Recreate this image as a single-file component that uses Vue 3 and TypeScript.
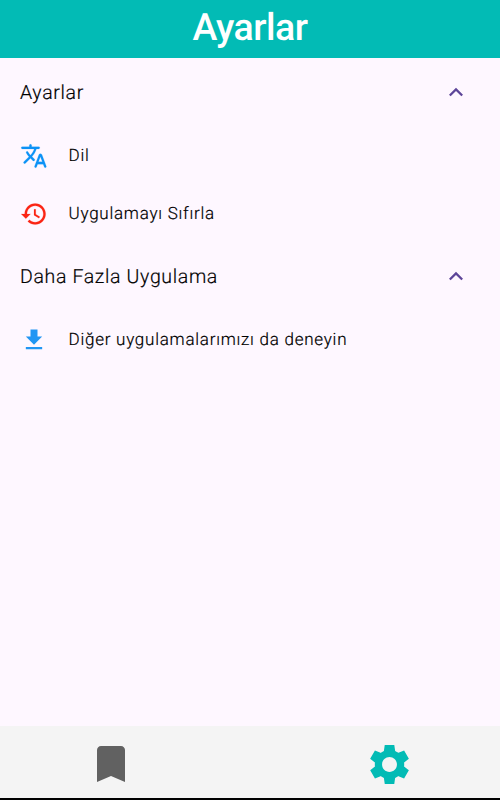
<script setup lang="ts">
interface Item { label: string; kind: string; path: string }
interface Section { title: string; items: Item[] }
const sections: Section[] = [
  {
    title: 'Ayarlar',
    items: [
      { label: 'Dil', kind: 'translate', path: 'M12.65 15.67c.14-.36.05-.77-.23-1.05l-2.09-2.06.03-.03c1.74-1.94 2.98-4.17 3.71-6.53h1.94c.54 0 .99-.45.99-.99v-.02c0-.54-.45-.99-.99-.99H10V3c0-.55-.45-1-1-1s-1 .45-1 1v1H1.99c-.54 0-.99.45-.99.99 0 .55.45.99.99.99h10.18C11.5 7.92 10.44 9.75 9 11.35c-.81-.89-1.49-1.86-2.06-2.88-.16-.29-.45-.47-.78-.47-.69 0-1.13.75-.79 1.35.63 1.13 1.4 2.21 2.3 3.21L3.3 16.87c-.4.39-.4 1.03 0 1.42.39.39 1.02.39 1.42 0L9 14l2.02 2.02c.51.51 1.38.32 1.63-.35zM17.5 10c-.6 0-1.14.37-1.35.94l-3.67 9.8c-.24.61.22 1.26.87 1.26.39 0 .74-.24.88-.61l.89-2.39h4.75l.9 2.39c.14.36.49.61.88.61.65 0 1.11-.65.88-1.26l-3.67-9.8c-.22-.57-.76-.94-1.36-.94zm-1.62 7l1.62-4.33L19.12 17h-3.24z' },
      { label: 'Uygulamayı Sıfırla', kind: 'history', path: 'M13 3c-4.97 0-9 4.03-9 9H1l3.89 3.89.07.14L9 12H6c0-3.87 3.13-7 7-7s7 3.13 7 7-3.13 7-7 7c-1.93 0-3.68-.79-4.94-2.06l-1.42 1.42C8.27 19.99 10.51 21 13 21c4.97 0 9-4.03 9-9s-4.03-9-9-9zm-1 5v5l4.28 2.54.72-1.21-3.5-2.08V8H12z' },
    ],
  },
  {
    title: 'Daha Fazla Uygulama',
    items: [
      { label: 'Diğer uygulamalarımızı da deneyin', kind: 'download', path: 'M19 9h-4V3H9v6H5l7 7 7-7zM5 18v2h14v-2H5z' },
    ],
  },
]
</script>

<template>
  <div class="screen">
    <header>Ayarlar</header>
    <main>
      <section v-for="s in sections" :key="s.title">
        <h2>{{ s.title }}
          <svg viewBox="0 0 24 24"><path d="M12 8.3l-6 6 1.41 1.41L12 11.13l4.59 4.58L18 14.3z" /></svg>
        </h2>
        <div v-for="i in s.items" :key="i.label" class="item">
          <svg viewBox="0 0 24 24" :class="i.kind"><path :d="i.path" /></svg>
          <span>{{ i.label }}</span>
        </div>
      </section>
    </main>
    <nav>
      <div class="tab"><svg class="bookmark" viewBox="0 0 24 24"><path d="M17 3H7c-1.1 0-1.99.9-1.99 2L5 21l7-3 7 3V5c0-1.1-.9-2-2-2z" /></svg></div>
      <div class="tab"><svg class="gear" viewBox="0 0 24 24"><path d="M19.44 12.99l-.01.02c.04-.33.08-.67.08-1.01 0-.34-.03-.66-.07-.99l.01.02 2.44-1.92-2.43-4.22-2.87 1.16.01.01c-.52-.4-1.09-.74-1.71-1h.01L14.44 2H9.57l-.44 3.07h.01c-.62.26-1.19.6-1.71 1l.01-.01-2.88-1.17-2.44 4.22 2.44 1.92.01-.02c-.04.33-.07.65-.07.99 0 .34.03.68.08 1.01l-.01-.02-2.1 1.65-.33.26 2.43 4.2 2.88-1.15-.02-.04c.53.41 1.1.75 1.73 1.01h-.03L9.58 22h4.85s.03-.18.06-.42l.38-2.65h-.01c.62-.26 1.2-.6 1.73-1.01l-.02.04 2.88 1.15 2.43-4.2s-.14-.12-.33-.26l-2.11-1.66zM12 15.8c-2.1 0-3.8-1.7-3.8-3.8s1.7-3.8 3.8-3.8 3.8 1.7 3.8 3.8-1.7 3.8-3.8 3.8z" /></svg></div>
    </nav>
  </div>
</template>

<style>
body { margin: 0; overflow: hidden; }
</style>
<style scoped>
.screen { width: 500px; height: 800px; display: flex; flex-direction: column; background: #fef7ff; font-family: Roboto, sans-serif; color: #000; text-rendering: geometricPrecision; }
header { height: 58px; box-sizing: border-box; padding-bottom: 2px; background: #02bbb5; color: #fff; display: flex; align-items: center; justify-content: center; font-size: 37.5px; font-weight: 500; letter-spacing: -0.5px; }
main { flex: 1; }
h2 { margin: 0; height: 68px; padding: 0 30px 0 20px; display: flex; align-items: center; justify-content: space-between; font-size: 19.5px; font-weight: 300; letter-spacing: 0.66px; -webkit-text-stroke: 0.2px #000; }
h2 svg { width: 28px; height: 28px; fill: #5d4599; }
.item { height: 58px; box-sizing: border-box; padding: 2px 20px 0; display: flex; align-items: center; gap: 20.5px; font-size: 17px; font-weight: 300; letter-spacing: 0.75px; -webkit-text-stroke: 0.2px #000; }
.item svg { width: 28px; height: 28px; }
.translate { fill: #0c92f6; stroke: #0c92f6; stroke-width: 0.15px; }
.download { fill: #2196f3; }
.history { fill: #fb2414; stroke: #fb2414; stroke-width: 0.15px; }
nav { height: 74.5px; box-sizing: border-box; background: #f4f4f4; border-bottom: 2px solid #000; display: flex; justify-content: space-between; padding: 5px 87px 0 86.5px; }
.tab { display: flex; align-items: center; }
.bookmark { width: 48px; height: 48px; fill: #616161; }
.gear { width: 47px; height: 47px; fill: #02bbb5; }
</style>
